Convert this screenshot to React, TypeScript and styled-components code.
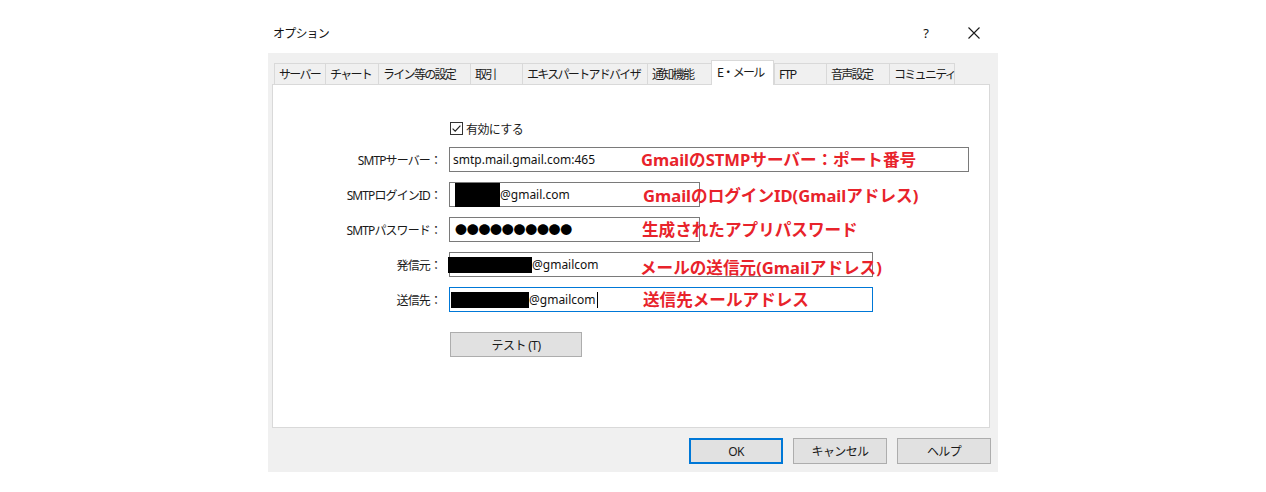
import React from "react";
import styled, { createGlobalStyle } from "styled-components";

const GlobalStyle = createGlobalStyle`
  html, body {
    margin: 0;
    padding: 0;
    background: #ffffff;
  }
  body {
    font-family: "Noto Sans", "Noto Sans CJK JP", sans-serif;
    color: #000;
  }
`;

const tabs = [
  { label: "サーバー", width: 51 },
  { label: "チャート", width: 53 },
  { label: "ライン等の設定", width: 92 },
  { label: "取引", width: 52 },
  { label: "エキスパートアドバイザ", width: 125 },
  { label: "通知機能", width: 64 },
  { label: "E・メール", width: 63, active: true },
  { label: "FTP", width: 52 },
  { label: "音声設定", width: 63 },
  { label: "コミュニティ", width: 66 },
];

const App = () => {
  return (
    <>
      <GlobalStyle />
      <Page>
        <Dialog>
          <TitleBar>
            <Title>オプション</Title>
            <TitleControls>
              <HelpMark>?</HelpMark>
              <CloseIcon viewBox="0 0 12 12">
                <path d="M0.5 0.5 L11.5 11.5 M11.5 0.5 L0.5 11.5" stroke="#1a1a1a" strokeWidth="1.1" fill="none" />
              </CloseIcon>
            </TitleControls>
          </TitleBar>

          <Client>
            <TabStrip>
              {tabs.map((t) => (
                <Tab key={t.label} $width={t.width} $active={!!t.active}>
                  {t.label}
                </Tab>
              ))}
            </TabStrip>

            <Panel>
              <Form>
                <CheckRow>
                  <CheckBox viewBox="0 0 13 13">
                    <rect x="0.5" y="0.5" width="12" height="12" fill="#fff" stroke="#333" />
                    <path d="M2.6 6.6 L5.2 9.2 L10.4 3.6" stroke="#222" strokeWidth="1.2" fill="none" />
                  </CheckBox>
                  <CheckLabel>有効にする</CheckLabel>
                </CheckRow>

                <FieldRow>
                  <Label>SMTPサーバー：</Label>
                  <Input $width={520}>smtp.mail.gmail.com:465</Input>
                  <Note $left={368} $dy={0}>GmailのSTMPサーバー：ポート番号</Note>
                </FieldRow>

                <FieldRow>
                  <Label>SMTPログインID：</Label>
                  <Input $width={251}>
                    <Redact $w={45} $h={24} $ml={2} />
                    @gmail.com
                  </Input>
                  <Note $left={370} $dy={1}>GmailのログインID(Gmailアドレス)</Note>
                </FieldRow>

                <FieldRow>
                  <Label>SMTPパスワード：</Label>
                  <Input $width={251}>
                    <Dots>●●●●●●●●●●</Dots>
                  </Input>
                  <Note $left={369} $dy={0}>生成されたアプリパスワード</Note>
                </FieldRow>

                <FieldRow>
                  <Label>発信元：</Label>
                  <Input $width={424}>
                    <Redact $w={84} $h={16} $ml={-5} />
                    @gmailcom
                  </Input>
                  <Note $left={367} $dy={3}>メールの送信元(Gmailアドレス)</Note>
                </FieldRow>

                <FieldRow>
                  <Label>送信先：</Label>
                  <Input $width={424} $focused>
                    <Redact $w={78} $h={16} $ml={-2} />
                    @gmailcom
                    <Caret />
                  </Input>
                  <Note $left={370} $dy={0}>送信先メールアドレス</Note>
                </FieldRow>

                <TestRow>
                  <PushButton $width={132} $height={25}>テスト (T)</PushButton>
                </TestRow>
              </Form>
            </Panel>

            <ButtonRow>
              <PushButton $width={94} $height={26} $default>OK</PushButton>
              <PushButton $width={94} $height={26}>キャンセル</PushButton>
              <PushButton $width={94} $height={26}>ヘルプ</PushButton>
            </ButtonRow>
          </Client>
        </Dialog>
      </Page>
    </>
  );
};

export default App;

const Page = styled.div`
  width: 1266px;
  height: 492px;
  padding-left: 268px;
  box-sizing: border-box;
`;

const Dialog = styled.div`
  width: 730px;
  display: flex;
  flex-direction: column;
`;

const TitleBar = styled.div`
  height: 53px;
  display: flex;
  align-items: flex-start;
  padding: 25px 0 0 5px;
  box-sizing: border-box;
`;

const Title = styled.div`
  font-family: "Noto Sans CJK JP", sans-serif;
  font-size: 12px;
  line-height: 16px;
  letter-spacing: -0.8px;
  color: #111;
`;

const TitleControls = styled.div`
  margin-left: auto;
  display: flex;
  align-items: center;
  gap: 39px;
  padding-right: 18px;
  height: 16px;
`;

const HelpMark = styled.span`
  font-family: "Noto Sans", sans-serif;
  font-size: 13px;
  color: #111;
`;

const CloseIcon = styled.svg`
  width: 12px;
  height: 12px;
`;

const Client = styled.div`
  background: #f0f0f0;
  height: 419px;
  padding: 7px 8px 0 4px;
  box-sizing: border-box;
  display: flex;
  flex-direction: column;
`;

const TabStrip = styled.div`
  display: flex;
  align-items: flex-end;
  height: 24px;
  padding-left: 2px;
`;

const Tab = styled.div<{ $width: number; $active: boolean }>`
  flex-shrink: 0;
  width: ${({ $width }) => $width}px;
  height: ${({ $active }) => ($active ? 25 : 21)}px;
  box-sizing: border-box;
  border: 1px solid #d9d9d9;
  border-right: ${({ $active }) => ($active ? "1px solid #d9d9d9" : "none")};
  border-bottom: none;
  background: ${({ $active }) => ($active ? "#ffffff" : "#f0f0f0")};
  margin-bottom: ${({ $active }) => ($active ? "-1px" : "0")};
  position: relative;
  z-index: ${({ $active }) => ($active ? 2 : 1)};
  padding: ${({ $active }) => ($active ? "2px 0 0 5px" : "1px 0 0 4px")};
  font-family: "Noto Sans CJK JP", sans-serif;
  font-size: 12px;
  line-height: 17px;
  letter-spacing: -1.7px;
  color: #1a1a1a;
  white-space: nowrap;

  &:last-child {
    border-right: 1px solid #d9d9d9;
  }
`;

const Panel = styled.div`
  height: 344px;
  background: #ffffff;
  border: 1px solid #d9d9d9;
  box-sizing: border-box;
`;

const Form = styled.div`
  display: flex;
  flex-direction: column;
  padding-top: 35px;
`;

const CheckRow = styled.div`
  display: flex;
  align-items: center;
  gap: 3px;
  padding-left: 177px;
  height: 16px;
  margin-bottom: 11px;
`;

const CheckBox = styled.svg`
  width: 13px;
  height: 13px;
`;

const CheckLabel = styled.span`
  font-family: "Noto Sans CJK JP", sans-serif;
  font-size: 12px;
  letter-spacing: -0.6px;
  color: #1a1a1a;
`;

const FieldRow = styled.div`
  position: relative;
  display: grid;
  grid-template-columns: 168px auto;
  column-gap: 8px;
  align-items: center;
  height: 25px;
  margin-bottom: 10px;
`;

const Label = styled.div`
  text-align: right;
  font-family: "Noto Sans", "Noto Sans CJK JP", sans-serif;
  font-size: 12px;
  letter-spacing: -0.9px;
  color: #1a1a1a;
  white-space: nowrap;
`;

const Input = styled.div<{ $width: number; $focused?: boolean }>`
  width: ${({ $width }) => $width}px;
  height: 25px;
  box-sizing: border-box;
  border: 1px solid ${({ $focused }) => ($focused ? "#0078d7" : "#7a7a7a")};
  background: #ffffff;
  display: flex;
  align-items: center;
  padding-left: 3px;
  font-family: "Noto Sans", "Noto Sans CJK JP", sans-serif;
  font-size: 12px;
  color: #111;
  white-space: nowrap;
`;

const Redact = styled.span<{ $w: number; $h: number; $ml: number }>`
  display: inline-block;
  width: ${({ $w }) => $w}px;
  height: ${({ $h }) => $h}px;
  margin-left: ${({ $ml }) => $ml}px;
  background: #000;
  flex-shrink: 0;
`;

const Caret = styled.span`
  display: inline-block;
  width: 1px;
  height: 16px;
  background: #000;
  margin-left: 1px;
`;

const Dots = styled.span`
  font-family: "Noto Sans CJK JP", sans-serif;
  font-size: 12px;
  letter-spacing: -0.3px;
  margin-left: 2px;
  color: #000;
`;

const Note = styled.div<{ $left: number; $dy: number }>`
  position: absolute;
  left: ${({ $left }) => $left}px;
  top: 50%;
  transform: translateY(calc(-50% + ${({ $dy }) => $dy}px));
  font-family: "Noto Sans", "Noto Sans CJK JP", sans-serif;
  font-weight: 700;
  font-size: 16.6px;
  line-height: 20px;
  color: #e8232b;
  white-space: nowrap;
  pointer-events: none;
`;

const TestRow = styled.div`
  padding: 10px 0 0 177px;
`;

const PushButton = styled.div<{ $width: number; $height: number; $default?: boolean }>`
  width: ${({ $width }) => $width}px;
  height: ${({ $height }) => $height}px;
  box-sizing: border-box;
  background: #e1e1e1;
  border: ${({ $default }) => ($default ? "2px solid #0078d7" : "1px solid #adadad")};
  display: flex;
  align-items: center;
  justify-content: center;
  font-family: "Noto Sans", "Noto Sans CJK JP", sans-serif;
  font-size: 12px;
  letter-spacing: -0.6px;
  color: #1a1a1a;
`;

const ButtonRow = styled.div`
  display: flex;
  justify-content: flex-end;
  gap: 10px;
  margin-top: 10px;
  margin-right: -1px;
`;
